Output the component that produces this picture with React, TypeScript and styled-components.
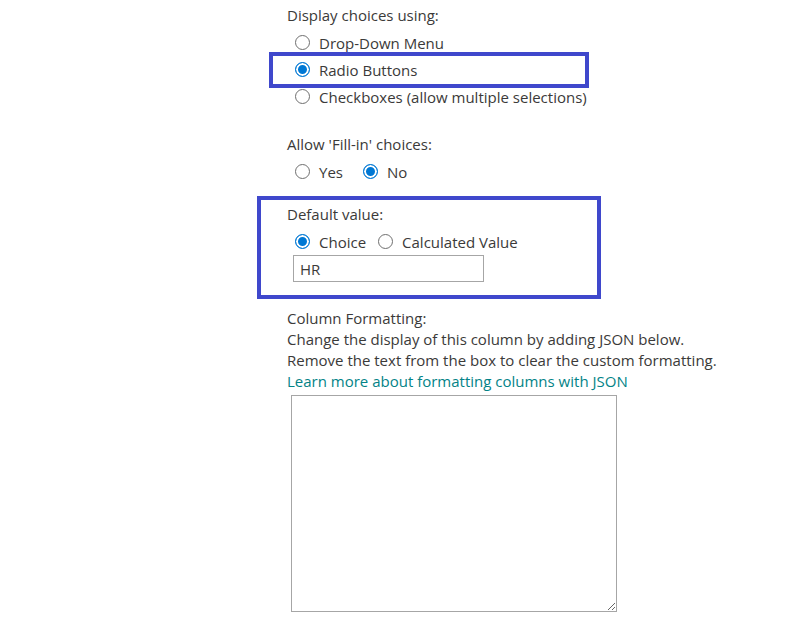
import React from "react";
import styled, { createGlobalStyle } from "styled-components";

const Global = createGlobalStyle`
  html, body { margin: 0; padding: 0; background: #ffffff; }
  body { font-family: "Open Sans", "Noto Sans", "Liberation Sans", sans-serif; color: #3b3a39; }
`;

const Page = styled.div`
  width: 787px;
  height: 631px;
  padding: 2px 0 0 287px;
  box-sizing: border-box;
  font-size: 15px;
  overflow: hidden;
`;

const Section = styled.div<{ $top?: number }>`
  position: relative;
  margin-top: ${(p) => p.$top ?? 0}px;
  display: flex;
  flex-direction: column;
`;

const Label = styled.div<{ $lh?: number }>`
  line-height: ${(p) => p.$lh ?? 27}px;
  height: ${(p) => p.$lh ?? 27}px;
  white-space: nowrap;
`;

const Row = styled.div<{ $gap?: number }>`
  position: relative;
  display: flex;
  align-items: center;
  height: 27px;
  padding-left: 8px;
  gap: ${(p) => p.$gap ?? 0}px;
`;

const Option = styled.label`
  display: flex;
  align-items: center;
  gap: 9px;
  white-space: nowrap;
`;

const Dot = styled.span<{ $on?: boolean }>`
  width: 15px;
  height: 15px;
  border-radius: 50%;
  box-sizing: border-box;
  border: 1px solid ${(p) => (p.$on ? "#0078d4" : "#6f6f6f")};
  background: ${(p) => (p.$on ? "#0078d4" : "#fff")};
  box-shadow: ${(p) => (p.$on ? "inset 0 0 0 2px #fff" : "none")};
  flex: none;
`;

const Highlight = styled.div<{ $l: number; $t: number; $w: number; $h: number }>`
  position: absolute;
  left: ${(p) => p.$l}px;
  top: ${(p) => p.$t}px;
  width: ${(p) => p.$w}px;
  height: ${(p) => p.$h}px;
  border: 4px solid #3f48cc;
  box-sizing: border-box;
  pointer-events: none;
`;

const TextBox = styled.input`
  margin-left: 6px;
  width: 191px;
  height: 27px;
  box-sizing: border-box;
  border: 1px solid #a6a6a6;
  padding: 0 6px;
  font: inherit;
  font-size: 15px;
  color: #3b3a39;
  outline: none;
`;

const Link = styled.a`
  color: #038387;
  text-decoration: none;
  line-height: 21px;
  height: 21px;
  white-space: nowrap;
`;

const JsonArea = styled.textarea`
  margin: 3px 0 0 4px;
  width: 326px;
  height: 217px;
  box-sizing: border-box;
  border: 1px solid #a6a6a6;
  font: inherit;
  resize: both;
  outline: none;
`;

function Radio({ label, on }: { label: string; on?: boolean }) {
  return (
    <Option>
      <Dot $on={on} />
      <span>{label}</span>
    </Option>
  );
}

export default function App() {
  return (
    <>
      <Global />
      <Page>
        <Section>
          <Label>Display choices using:</Label>
          <Row>
            <Radio label="Drop-Down Menu" />
          </Row>
          <Row>
            <Highlight $l={-18} $t={-4} $w={320} $h={36} />
            <Radio label="Radio Buttons" on />
          </Row>
          <Row>
            <Radio label="Checkboxes (allow multiple selections)" />
          </Row>
        </Section>

        <Section $top={21}>
          <Label>Allow 'Fill-in' choices:</Label>
          <Row $gap={20}>
            <Radio label="Yes" />
            <Radio label="No" on />
          </Row>
        </Section>

        <Section $top={16}>
          <Highlight $l={-30} $t={-5} $w={344} $h={103} />
          <Label>Default value:</Label>
          <Row $gap={12}>
            <Radio label="Choice" on />
            <Radio label="Calculated Value" />
          </Row>
          <TextBox defaultValue="HR" />
        </Section>

        <Section $top={26}>
          <Label $lh={21}>Column Formatting:</Label>
          <Label $lh={21}>Change the display of this column by adding JSON below.</Label>
          <Label $lh={21}>Remove the text from the box to clear the custom formatting.</Label>
          <Link href="#">Learn more about formatting columns with JSON</Link>
          <JsonArea />
        </Section>
      </Page>
    </>
  );
}
